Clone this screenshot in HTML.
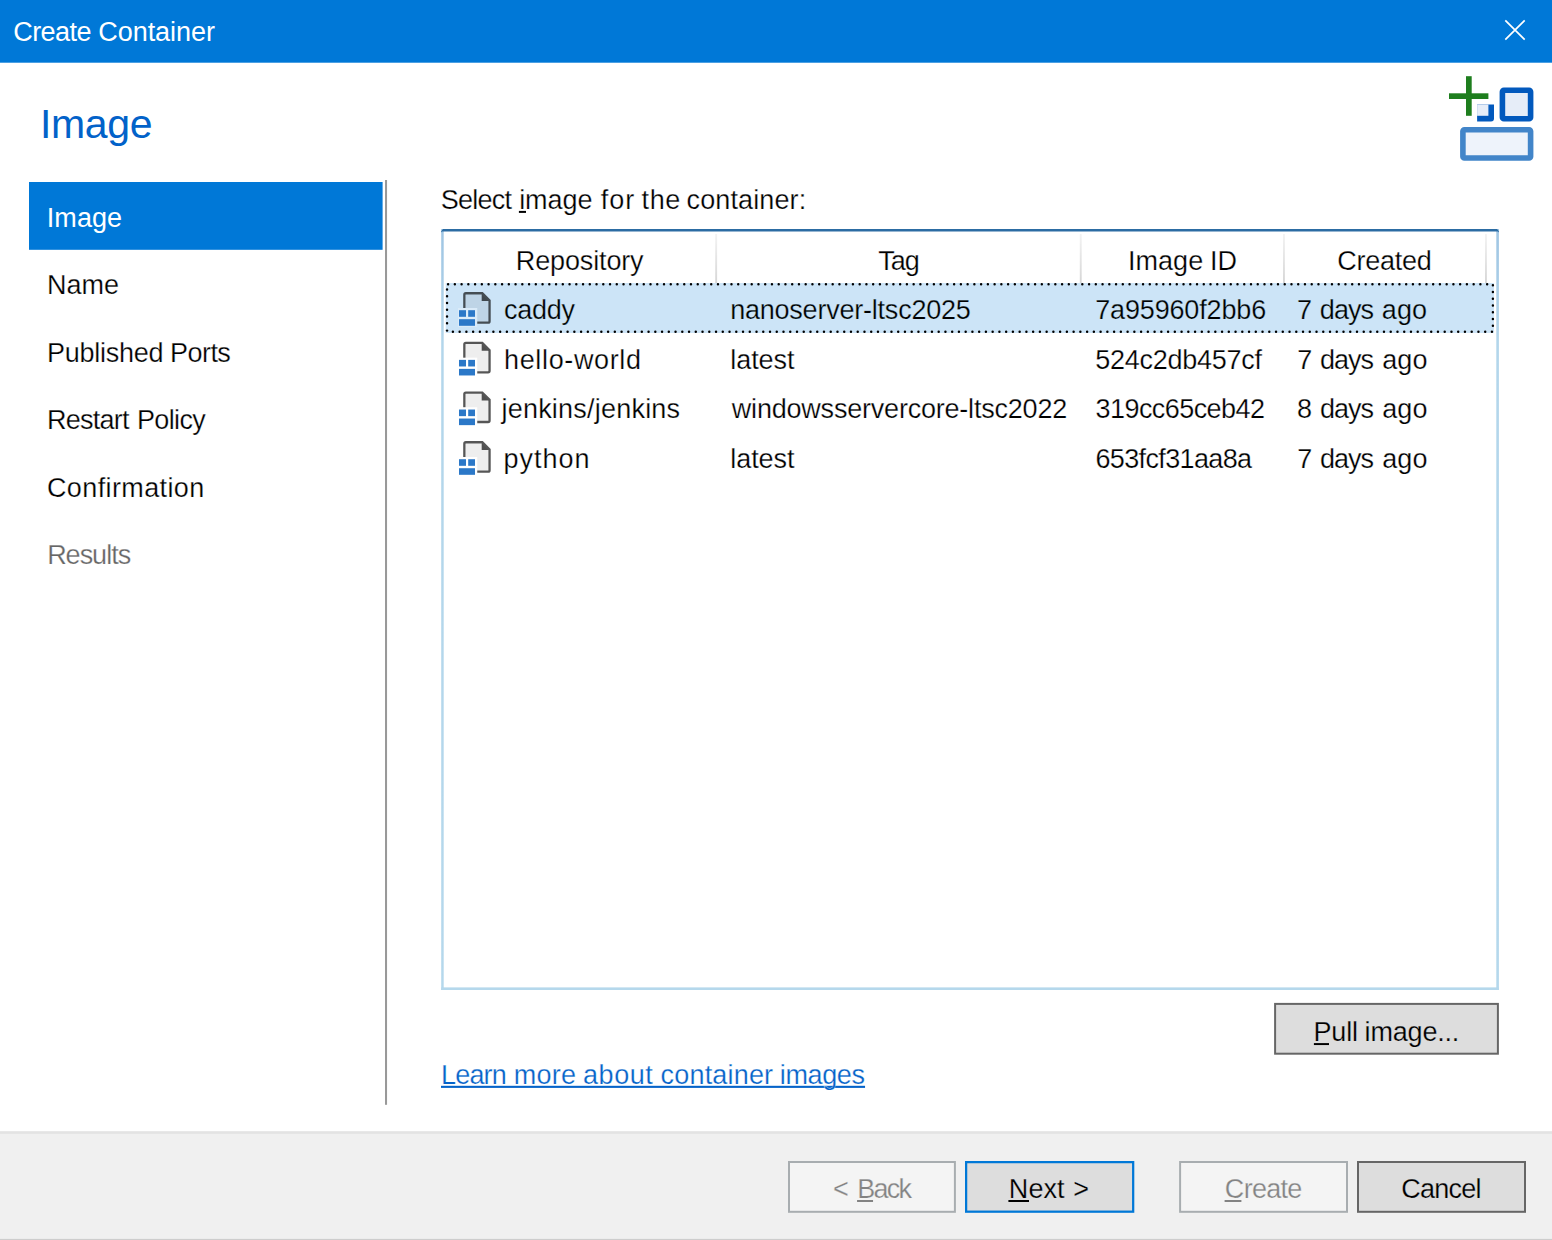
<!DOCTYPE html>
<html lang="en"><head><meta charset="utf-8"><title>Create Container</title>
<style>
html,body{margin:0;padding:0;}
body{width:1552px;height:1240px;position:relative;overflow:hidden;background:#fff;font-family:"Liberation Sans",sans-serif;}
.a{position:absolute;}
.t{position:absolute;white-space:pre;line-height:1;}
.t u{text-decoration:none;}
</style></head><body>

<svg class="a" style="left:0;top:0" width="1552" height="1240" viewBox="0 0 1552 1240">
<defs><linearGradient id="sep" x1="0" y1="0" x2="0" y2="1"><stop offset="0" stop-color="#f3f3f3"/><stop offset="1" stop-color="#d6d6d6"/></linearGradient><linearGradient id="lb" x1="0" y1="0" x2="0" y2="1"><stop offset="0" stop-color="#9fc5e3"/><stop offset="0.15" stop-color="#b3d6eb"/><stop offset="1" stop-color="#b5d8ec"/></linearGradient></defs>
<rect x="0" y="0" width="1552.00" height="62.70" fill="#0078d7" />
<path d="M1505.3 20.3 L1524.7 39.7 M1524.7 20.3 L1505.3 39.7" stroke="#fff" stroke-width="1.7" fill="none"/>
<rect x="1449" y="93.3" width="39.4" height="5.7" fill="#1e7e1e"/>
<rect x="1466" y="76.2" width="5.7" height="39.6" fill="#1e7e1e"/>
<path d="M1477.1 104.5 H1494 V118.5 Q1494 121.5 1491 121.5 H1477.1 Z" fill="#0259bd"/>
<rect x="1477.1" y="104.5" width="11.3" height="11.3" fill="#e6edf8"/>
<rect x="1502.4" y="90.3" width="28.2" height="28.4" rx="1.5" fill="#e6edf8" stroke="#0259bd" stroke-width="5.6"/>
<rect x="1462.9" y="129.8" width="67.7" height="28.2" rx="1.5" fill="#eef3fb" stroke="#4285c9" stroke-width="5.6"/>
<rect x="29.0" y="182" width="353.60" height="67.80" fill="#0078d7" />
<rect x="385.0" y="180" width="2.05" height="924.80" fill="#999" />
<rect x="441.2" y="229" width="2.50" height="761.00" fill="url(#lb)" />
<rect x="1496.3" y="229" width="2.60" height="761.00" fill="url(#lb)" />
<rect x="441.2" y="987.4" width="1057.70" height="2.60" fill="#b5d8ec" />
<path d="M441.2 231.2 L443 229 H1497.1 L1498.9 231.2 V232.4 L1498 231.6 H442.1 L441.2 232.4 Z" fill="#2c6ca3"/>
<rect x="715.2" y="234" width="1.90" height="49.00" fill="url(#sep)" />
<rect x="1079.8" y="234" width="1.90" height="49.00" fill="url(#sep)" />
<rect x="1283.0" y="234" width="1.90" height="49.00" fill="url(#sep)" />
<rect x="1485.0" y="234" width="1.90" height="49.00" fill="url(#sep)" />
<rect x="445.7" y="283" width="1048.30" height="50.00" fill="#cce4f7" />
<g stroke="#000" stroke-width="2.45" stroke-dasharray="0.01 6.737" stroke-linecap="round" fill="none">
<path d="M448.1 284.15 H1490"/><path d="M452.9 331.8 H1494"/><path d="M447.05 289.5 V327"/><path d="M447.05 330.6 v0.01"/><path d="M1492.9 285.3 V331"/>
</g>
<rect x="1274.1" y="1002.9" width="224.80" height="51.80" fill="#666" /><rect x="1276.1" y="1004.9" width="220.80" height="47.80" fill="#dddddd" />
<rect x="0" y="1131.3" width="1552.00" height="108.70" fill="#f0f0f0" />
<rect x="0" y="1131.3" width="1552.00" height="2.50" fill="#e3e3e3" />
<rect x="0" y="1238.9" width="1552.00" height="1.10" fill="#cdcdcd" />
<rect x="788.0" y="1161" width="167.90" height="51.80" fill="#a8adb0" /><rect x="790.0" y="1163.0" width="163.90" height="47.80" fill="#f4f4f4" />
<rect x="965.0" y="1161" width="169.30" height="51.80" fill="#0078d7" /><rect x="967.25" y="1163.25" width="164.80" height="47.30" fill="#dddddd" />
<rect x="1179.1" y="1161" width="168.90" height="51.80" fill="#a8adb0" /><rect x="1181.1" y="1163.0" width="164.90" height="47.80" fill="#f4f4f4" />
<rect x="1357.0" y="1161" width="169.00" height="51.80" fill="#666" /><rect x="1359.0" y="1163.0" width="165.00" height="47.80" fill="#dddddd" />
<rect x="518.9" y="210.9" width="7.10" height="2.00" fill="#000" />
<rect x="1313.9" y="1043.1" width="15.10" height="1.95" fill="#000" />
<rect x="857.06" y="1200" width="15.98" height="2.00" fill="#838383" />
<rect x="1008.4" y="1200" width="20.60" height="2.00" fill="#000" />
<rect x="1224.6" y="1200" width="16.80" height="2.00" fill="#838383" />
<rect x="441.0" y="1085.8" width="424.05" height="2.10" fill="#0563c9" />
<g transform="translate(457.9 291.00)">
<path d="M7.6 3.4 H24 L30.5 9.9 V30.5 H19.3 V17 H7.6 Z" fill="rgba(0,0,0,0.065)"/>
<g opacity="0.66"><path d="M6.45 17 V3.7 Q6.45 2.25 7.9 2.25 H24.4 L31.65 9.5 V30.2 Q31.65 31.65 30.2 31.65 H19.3" fill="none" stroke="#000" stroke-width="2.3"/>
<path d="M23.8 2 L32 10.1 H23.8 Z" fill="#000"/></g>
<rect x="0.1" y="17" width="19.2" height="19" fill="rgba(255,255,255,0.28)"/>
<rect x="1.1" y="19.2" width="7" height="6.6" fill="#2b78c8"/>
<rect x="10.3" y="19.2" width="6.8" height="6.6" fill="#2b78c8"/>
<rect x="1.1" y="28.2" width="16" height="6.6" fill="#2b78c8"/>
</g>
<g transform="translate(457.9 340.67)">
<path d="M7.6 3.4 H24 L30.5 9.9 V30.5 H19.3 V17 H7.6 Z" fill="rgba(0,0,0,0.065)"/>
<g opacity="0.66"><path d="M6.45 17 V3.7 Q6.45 2.25 7.9 2.25 H24.4 L31.65 9.5 V30.2 Q31.65 31.65 30.2 31.65 H19.3" fill="none" stroke="#000" stroke-width="2.3"/>
<path d="M23.8 2 L32 10.1 H23.8 Z" fill="#000"/></g>
<rect x="0.1" y="17" width="19.2" height="19" fill="rgba(255,255,255,0.28)"/>
<rect x="1.1" y="19.2" width="7" height="6.6" fill="#2b78c8"/>
<rect x="10.3" y="19.2" width="6.8" height="6.6" fill="#2b78c8"/>
<rect x="1.1" y="28.2" width="16" height="6.6" fill="#2b78c8"/>
</g>
<g transform="translate(457.9 390.34)">
<path d="M7.6 3.4 H24 L30.5 9.9 V30.5 H19.3 V17 H7.6 Z" fill="rgba(0,0,0,0.065)"/>
<g opacity="0.66"><path d="M6.45 17 V3.7 Q6.45 2.25 7.9 2.25 H24.4 L31.65 9.5 V30.2 Q31.65 31.65 30.2 31.65 H19.3" fill="none" stroke="#000" stroke-width="2.3"/>
<path d="M23.8 2 L32 10.1 H23.8 Z" fill="#000"/></g>
<rect x="0.1" y="17" width="19.2" height="19" fill="rgba(255,255,255,0.28)"/>
<rect x="1.1" y="19.2" width="7" height="6.6" fill="#2b78c8"/>
<rect x="10.3" y="19.2" width="6.8" height="6.6" fill="#2b78c8"/>
<rect x="1.1" y="28.2" width="16" height="6.6" fill="#2b78c8"/>
</g>
<g transform="translate(457.9 440.01)">
<path d="M7.6 3.4 H24 L30.5 9.9 V30.5 H19.3 V17 H7.6 Z" fill="rgba(0,0,0,0.065)"/>
<g opacity="0.66"><path d="M6.45 17 V3.7 Q6.45 2.25 7.9 2.25 H24.4 L31.65 9.5 V30.2 Q31.65 31.65 30.2 31.65 H19.3" fill="none" stroke="#000" stroke-width="2.3"/>
<path d="M23.8 2 L32 10.1 H23.8 Z" fill="#000"/></g>
<rect x="0.1" y="17" width="19.2" height="19" fill="rgba(255,255,255,0.28)"/>
<rect x="1.1" y="19.2" width="7" height="6.6" fill="#2b78c8"/>
<rect x="10.3" y="19.2" width="6.8" height="6.6" fill="#2b78c8"/>
<rect x="1.1" y="28.2" width="16" height="6.6" fill="#2b78c8"/>
</g>
</svg>
<div id="t_title">
<div class="t" id="t_title_0" style="left:13.30px;top:19.00px;font-size:27.0px;color:#fff;letter-spacing:-0.588px;">Create </div>
<div class="t" id="t_title_1" style="left:98.30px;top:19.00px;font-size:27.0px;color:#fff;letter-spacing:-0.053px;">Container</div>
</div>
<div id="t_head">
<div class="t" id="t_head_0" style="left:40.03px;top:104.00px;font-size:41.0px;color:#0262c9;letter-spacing:-0.364px;">Image</div>
</div>
<div id="s_image">
<div class="t" id="s_image_0" style="left:46.72px;top:205.00px;font-size:27.0px;color:#fff;letter-spacing:0.093px;">Image</div>
</div>
<div id="s_name">
<div class="t" id="s_name_0" style="left:47.07px;top:272.00px;font-size:27.0px;color:#000;letter-spacing:-0.010px;-webkit-text-stroke:0.25px #fff;">Name</div>
</div>
<div id="s_ports">
<div class="t" id="s_ports_0" style="left:47.07px;top:340.00px;font-size:27.0px;color:#000;letter-spacing:-0.268px;-webkit-text-stroke:0.25px #fff;">Published </div>
<div class="t" id="s_ports_1" style="left:170.02px;top:340.00px;font-size:27.0px;color:#000;letter-spacing:-0.547px;-webkit-text-stroke:0.25px #fff;">Ports</div>
</div>
<div id="s_restart">
<div class="t" id="s_restart_0" style="left:47.07px;top:407.00px;font-size:27.0px;color:#000;letter-spacing:-0.759px;-webkit-text-stroke:0.25px #fff;">Restart </div>
<div class="t" id="s_restart_1" style="left:137.02px;top:407.00px;font-size:27.0px;color:#000;letter-spacing:-0.664px;-webkit-text-stroke:0.25px #fff;">Policy</div>
</div>
<div id="s_conf">
<div class="t" id="s_conf_0" style="left:46.99px;top:475.00px;font-size:27.0px;color:#000;letter-spacing:0.382px;-webkit-text-stroke:0.25px #fff;">Confirmation</div>
</div>
<div id="s_results">
<div class="t" id="s_results_0" style="left:47.14px;top:542.00px;font-size:27.0px;color:#666666;letter-spacing:-1.005px;-webkit-text-stroke:0.25px #fff;">Results</div>
</div>
<div id="l_select">
<div class="t" id="l_select_0" style="left:440.63px;top:187.00px;font-size:27.0px;color:#000;letter-spacing:-0.750px;-webkit-text-stroke:0.25px #fff;">Select </div>
<div class="t" id="l_select_1" style="left:519.13px;top:187.00px;font-size:27.0px;color:#000;letter-spacing:-0.018px;-webkit-text-stroke:0.25px #fff;"><u>i</u>mage </div>
<div class="t" id="l_select_2" style="left:600.66px;top:187.00px;font-size:27.0px;color:#000;letter-spacing:1.086px;-webkit-text-stroke:0.25px #fff;">for </div>
<div class="t" id="l_select_3" style="left:641.62px;top:187.00px;font-size:27.0px;color:#000;letter-spacing:0.587px;-webkit-text-stroke:0.25px #fff;">the </div>
<div class="t" id="l_select_4" style="left:686.56px;top:187.00px;font-size:27.0px;color:#000;letter-spacing:0.119px;-webkit-text-stroke:0.25px #fff;">container:</div>
</div>
<div id="h_repo">
<div class="t" id="h_repo_0" style="left:515.86px;top:248.00px;font-size:27.0px;color:#000;letter-spacing:-0.147px;-webkit-text-stroke:0.25px #fff;">Repository</div>
</div>
<div id="h_tag">
<div class="t" id="h_tag_0" style="left:878.24px;top:248.00px;font-size:27.0px;color:#000;letter-spacing:-0.949px;-webkit-text-stroke:0.25px #fff;">Tag</div>
</div>
<div id="h_id">
<div class="t" id="h_id_0" style="left:1128.09px;top:248.00px;font-size:27.0px;color:#000;letter-spacing:0.011px;-webkit-text-stroke:0.25px #fff;">Image </div>
<div class="t" id="h_id_1" style="left:1210.10px;top:248.00px;font-size:27.0px;color:#000;letter-spacing:-0.182px;-webkit-text-stroke:0.25px #fff;">ID</div>
</div>
<div id="h_created">
<div class="t" id="h_created_0" style="left:1337.36px;top:248.00px;font-size:27.0px;color:#000;letter-spacing:-0.282px;-webkit-text-stroke:0.25px #fff;">Created</div>
</div>
<div id="r0c0">
<div class="t" id="r0c0_0" style="left:504.12px;top:297.00px;font-size:27.0px;color:#000;letter-spacing:-0.259px;-webkit-text-stroke:0.25px #cce4f7;">caddy</div>
</div>
<div id="r0c1">
<div class="t" id="r0c1_0" style="left:730.16px;top:297.00px;font-size:27.0px;color:#000;letter-spacing:-0.221px;-webkit-text-stroke:0.25px #cce4f7;">nanoserver-ltsc2025</div>
</div>
<div id="r0c2">
<div class="t" id="r0c2_0" style="left:1095.24px;top:297.00px;font-size:27.0px;color:#000;letter-spacing:-0.161px;-webkit-text-stroke:0.25px #cce4f7;">7a95960f2bb6</div>
</div>
<div id="r0c3">
<div class="t" id="r0c3_0" style="left:1297.05px;top:297.00px;font-size:27.0px;color:#000;letter-spacing:0.000px;-webkit-text-stroke:0.25px #cce4f7;">7 </div>
<div class="t" id="r0c3_1" style="left:1319.86px;top:297.00px;font-size:27.0px;color:#000;letter-spacing:-0.975px;-webkit-text-stroke:0.25px #cce4f7;">days </div>
<div class="t" id="r0c3_2" style="left:1381.80px;top:297.00px;font-size:27.0px;color:#000;letter-spacing:0.080px;-webkit-text-stroke:0.25px #cce4f7;">ago</div>
</div>
<div id="r1c0">
<div class="t" id="r1c0_0" style="left:504.07px;top:347.00px;font-size:27.0px;color:#000;letter-spacing:0.635px;-webkit-text-stroke:0.25px #fff;">hello-world</div>
</div>
<div id="r1c1">
<div class="t" id="r1c1_0" style="left:730.35px;top:347.00px;font-size:27.0px;color:#000;letter-spacing:-0.098px;-webkit-text-stroke:0.25px #fff;">latest</div>
</div>
<div id="r1c2">
<div class="t" id="r1c2_0" style="left:1095.36px;top:347.00px;font-size:27.0px;color:#000;letter-spacing:-0.267px;-webkit-text-stroke:0.25px #fff;">524c2db457cf</div>
</div>
<div id="r1c3">
<div class="t" id="r1c3_0" style="left:1297.15px;top:347.00px;font-size:27.0px;color:#000;letter-spacing:0.000px;-webkit-text-stroke:0.25px #fff;">7 </div>
<div class="t" id="r1c3_1" style="left:1319.95px;top:347.00px;font-size:27.0px;color:#000;letter-spacing:-1.011px;-webkit-text-stroke:0.25px #fff;">days </div>
<div class="t" id="r1c3_2" style="left:1382.20px;top:347.00px;font-size:27.0px;color:#000;letter-spacing:0.106px;-webkit-text-stroke:0.25px #fff;">ago</div>
</div>
<div id="r2c0">
<div class="t" id="r2c0_0" style="left:501.48px;top:396.00px;font-size:27.0px;color:#000;letter-spacing:0.216px;-webkit-text-stroke:0.25px #fff;">jenkins/jenkins</div>
</div>
<div id="r2c1">
<div class="t" id="r2c1_0" style="left:731.84px;top:396.00px;font-size:27.0px;color:#000;letter-spacing:-0.210px;-webkit-text-stroke:0.25px #fff;">windowsservercore-ltsc2022</div>
</div>
<div id="r2c2">
<div class="t" id="r2c2_0" style="left:1095.53px;top:396.00px;font-size:27.0px;color:#000;letter-spacing:-0.559px;-webkit-text-stroke:0.25px #fff;">319cc65ceb42</div>
</div>
<div id="r2c3">
<div class="t" id="r2c3_0" style="left:1297.04px;top:396.00px;font-size:27.0px;color:#000;letter-spacing:0.000px;-webkit-text-stroke:0.25px #fff;">8 </div>
<div class="t" id="r2c3_1" style="left:1319.95px;top:396.00px;font-size:27.0px;color:#000;letter-spacing:-1.011px;-webkit-text-stroke:0.25px #fff;">days </div>
<div class="t" id="r2c3_2" style="left:1382.20px;top:396.00px;font-size:27.0px;color:#000;letter-spacing:0.106px;-webkit-text-stroke:0.25px #fff;">ago</div>
</div>
<div id="r3c0">
<div class="t" id="r3c0_0" style="left:503.62px;top:446.00px;font-size:27.0px;color:#000;letter-spacing:0.952px;-webkit-text-stroke:0.25px #fff;">python</div>
</div>
<div id="r3c1">
<div class="t" id="r3c1_0" style="left:730.35px;top:446.00px;font-size:27.0px;color:#000;letter-spacing:-0.098px;-webkit-text-stroke:0.25px #fff;">latest</div>
</div>
<div id="r3c2">
<div class="t" id="r3c2_0" style="left:1095.41px;top:446.00px;font-size:27.0px;color:#000;letter-spacing:-0.629px;-webkit-text-stroke:0.25px #fff;">653fcf31aa8a</div>
</div>
<div id="r3c3">
<div class="t" id="r3c3_0" style="left:1297.15px;top:446.00px;font-size:27.0px;color:#000;letter-spacing:0.000px;-webkit-text-stroke:0.25px #fff;">7 </div>
<div class="t" id="r3c3_1" style="left:1319.95px;top:446.00px;font-size:27.0px;color:#000;letter-spacing:-1.011px;-webkit-text-stroke:0.25px #fff;">days </div>
<div class="t" id="r3c3_2" style="left:1382.20px;top:446.00px;font-size:27.0px;color:#000;letter-spacing:0.106px;-webkit-text-stroke:0.25px #fff;">ago</div>
</div>
<div id="b_pull">
<div class="t" id="b_pull_0" style="left:1313.40px;top:1019.00px;font-size:27.0px;color:#000;letter-spacing:-0.123px;-webkit-text-stroke:0.25px #dddddd;"><u>P</u>ull </div>
<div class="t" id="b_pull_1" style="left:1364.62px;top:1019.00px;font-size:27.0px;color:#000;letter-spacing:-0.188px;-webkit-text-stroke:0.25px #dddddd;">image...</div>
</div>
<div id="l_link">
<div class="t" id="l_link_0" style="left:440.93px;top:1062.00px;font-size:27.0px;color:#0563c9;letter-spacing:-0.782px;-webkit-text-stroke:0.25px #fff;">Learn </div>
<div class="t" id="l_link_1" style="left:513.66px;top:1062.00px;font-size:27.0px;color:#0563c9;letter-spacing:0.257px;-webkit-text-stroke:0.25px #fff;">more </div>
<div class="t" id="l_link_2" style="left:583.05px;top:1062.00px;font-size:27.0px;color:#0563c9;letter-spacing:0.550px;-webkit-text-stroke:0.25px #fff;">about </div>
<div class="t" id="l_link_3" style="left:660.61px;top:1062.00px;font-size:27.0px;color:#0563c9;letter-spacing:0.173px;-webkit-text-stroke:0.25px #fff;">container </div>
<div class="t" id="l_link_4" style="left:779.85px;top:1062.00px;font-size:27.0px;color:#0563c9;letter-spacing:-0.401px;-webkit-text-stroke:0.25px #fff;">images</div>
</div>
<div id="b_back">
<div class="t" id="b_back_0" style="left:832.97px;top:1176.00px;font-size:27.0px;color:#838383;letter-spacing:0.000px;-webkit-text-stroke:0.25px #f4f4f4;">&lt; </div>
<div class="t" id="b_back_1" style="left:857.17px;top:1176.00px;font-size:27.0px;color:#838383;letter-spacing:-1.712px;-webkit-text-stroke:0.25px #f4f4f4;"><u>B</u>ack</div>
</div>
<div id="b_next">
<div class="t" id="b_next_0" style="left:1008.84px;top:1176.00px;font-size:27.0px;color:#000;letter-spacing:0.048px;-webkit-text-stroke:0.25px #dddddd;"><u>N</u>ext </div>
<div class="t" id="b_next_1" style="left:1073.34px;top:1176.00px;font-size:27.0px;color:#000;letter-spacing:0.000px;-webkit-text-stroke:0.25px #dddddd;">&gt;</div>
</div>
<div id="b_create">
<div class="t" id="b_create_0" style="left:1224.83px;top:1176.00px;font-size:27.0px;color:#838383;letter-spacing:-0.704px;-webkit-text-stroke:0.25px #f4f4f4;"><u>C</u>reate</div>
</div>
<div id="b_cancel">
<div class="t" id="b_cancel_0" style="left:1401.17px;top:1176.00px;font-size:27.0px;color:#000;letter-spacing:-0.719px;-webkit-text-stroke:0.25px #dddddd;">Cancel</div>
</div>
</body></html>
